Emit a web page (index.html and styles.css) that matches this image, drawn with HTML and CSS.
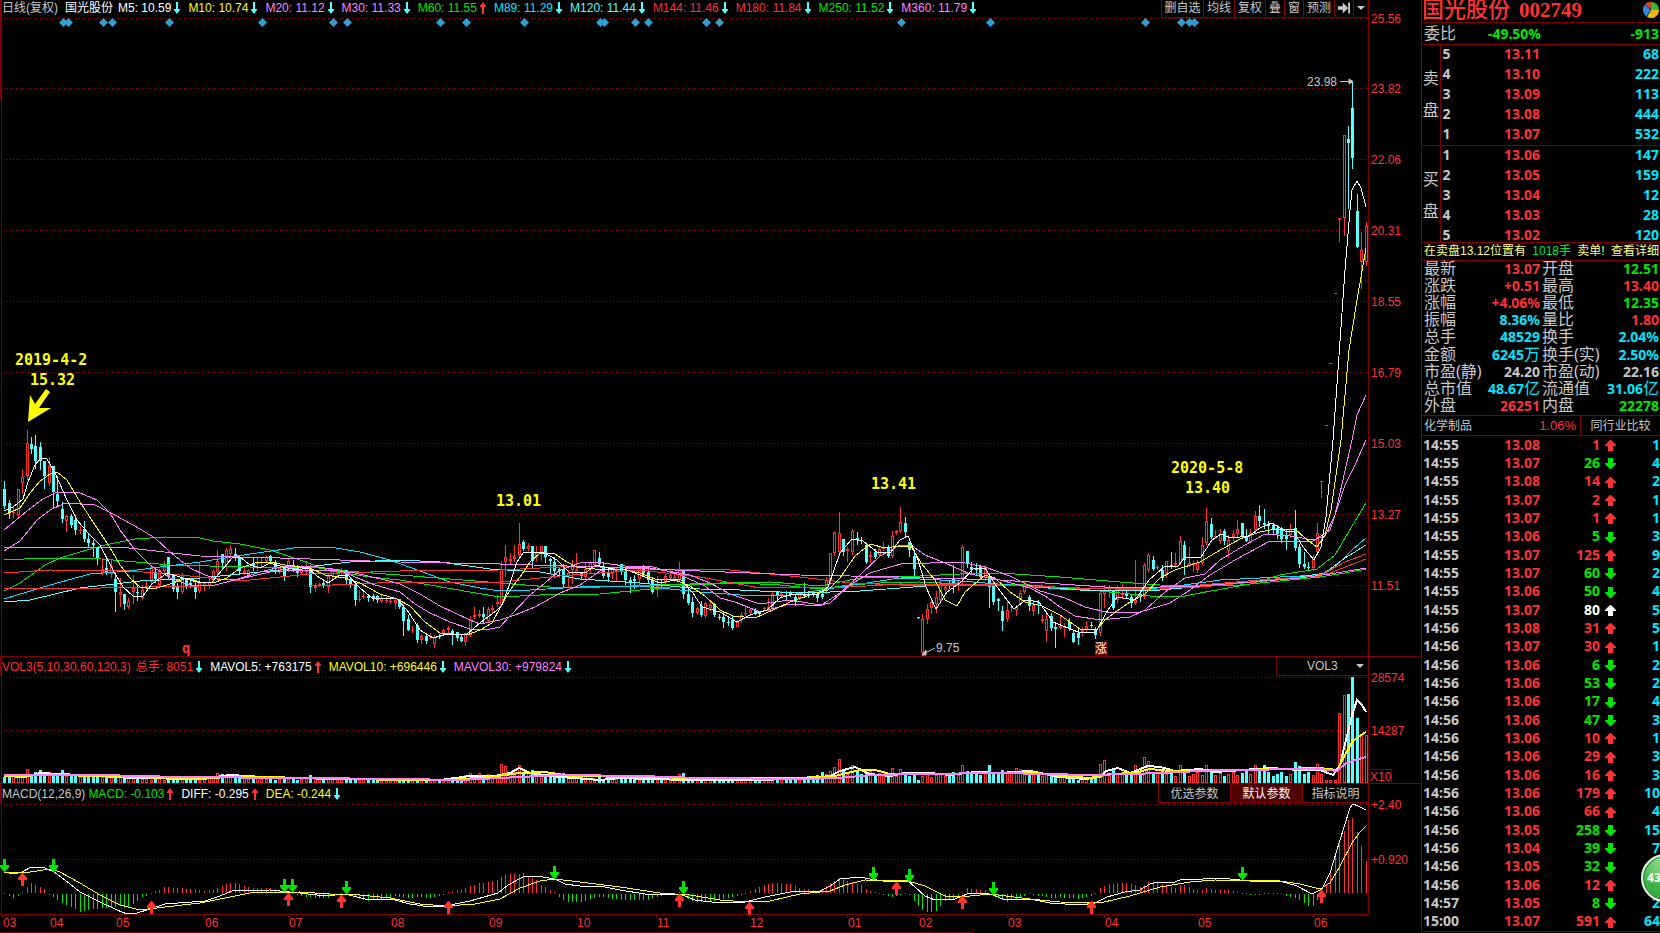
FILE: index.html
```html
<!DOCTYPE html>
<html lang="zh-CN">
<head>
<meta charset="utf-8">
<title>国光股份 002749</title>
<link rel="stylesheet" href="styles.css">
</head>
<body>
<div class="terminal">
  <main class="charts">
    <section class="pane">
      <header class="pane-head pane-head--price">
        <div class="legend" id="legend-price">
          <span class="grey legend-title">日线(复权)</span>
          <span class="white legend-name">国光股份</span>
        </div>
        <nav class="tools">
          <button class="tool">删自选</button>
          <button class="tool">均线</button>
          <button class="tool">复权</button>
          <button class="tool">叠</button>
          <button class="tool">窗</button>
          <button class="tool">预测</button>
          <button class="tool" aria-label="跳到最新"><svg width="13" height="12" viewBox="0 0 13 12"><path fill="#c8c8c8" d="M0 4h5V0l6 6-6 6V8H0zM11 0h2v12h-2z"/></svg></button>
          <button class="tool tool--last" aria-label="更多"><svg width="8" height="4" viewBox="0 0 8 4"><path fill="#c8c8c8" d="M0 0h8L4 4z"/></svg></button>
        </nav>
        <span class="axis-gap"></span>
      </header>
      <svg class="plot" id="price" viewBox="0 18 1421 639"></svg>
    </section>
    <section class="pane">
      <header class="pane-head">
        <div class="legend legend--vol" id="legend-vol"></div>
        <div class="picker">
          <select class="picker-select" aria-label="指标"><option>VOL3</option></select>
          <svg class="picker-arrow" width="8" height="4" viewBox="0 0 8 4"><path fill="#c8c8c8" d="M0 0h8L4 4z"/></svg>
        </div>
        <span class="axis-gap"></span>
      </header>
      <svg class="plot" id="volume" viewBox="0 676 1421 108"></svg>
    </section>
    <section class="pane">
      <header class="pane-head">
        <div class="legend" id="legend-macd"></div>
        <div class="params">
          <button class="param">优选参数</button>
          <button class="param param--on">默认参数</button>
          <button class="param">指标说明</button>
        </div>
        <span class="axis-gap"></span>
      </header>
      <svg class="plot" id="macd" viewBox="0 803 1421 130"></svg>
    </section>
  </main>

  <aside class="quote">
    <h1 class="quote-title"><span class="quote-name">国光股份</span><span>002749</span>
      <svg class="pie" width="16" height="16" viewBox="0 0 16 16"><path fill="#e2402c" d="M7.500 7.500L2 2A8 8 0 0 1 8 0z"/><path fill="#38b838" d="M8 8V0A8 8 0 0 1 16 8z"/><path fill="#e8b820" d="M8 8h8A8 8 0 0 1 4 15z"/><path fill="#2f86d8" d="M7.500 8l-4 6.500A8 8 0 0 1 2 2.500z"/></svg>
    </h1>
    <div class="ratio"><span class="ratio-label">委比</span><b class="green ratio-pct">-49.50%</b><b class="green ratio-diff">-913</b></div>
    <div class="book">
      <table class="book-table">
        <tr><th class="side" rowspan="5">卖<br>盘</th><td class="level">5</td><td class="red price">13.11</td><td class="cyan qty">68</td></tr>
        <tr><td class="level">4</td><td class="red price">13.10</td><td class="cyan qty">222</td></tr>
        <tr><td class="level">3</td><td class="red price">13.09</td><td class="cyan qty">113</td></tr>
        <tr><td class="level">2</td><td class="red price">13.08</td><td class="cyan qty">444</td></tr>
        <tr><td class="level">1</td><td class="red price">13.07</td><td class="cyan qty">532</td></tr>
      </table>
    </div>
    <div class="book book--buy">
      <table class="book-table">
        <tr><th class="side" rowspan="5">买<br>盘</th><td class="level">1</td><td class="red price">13.06</td><td class="cyan qty">147</td></tr>
        <tr><td class="level">2</td><td class="red price">13.05</td><td class="cyan qty">159</td></tr>
        <tr><td class="level">3</td><td class="red price">13.04</td><td class="cyan qty">12</td></tr>
        <tr><td class="level">4</td><td class="red price">13.03</td><td class="cyan qty">28</td></tr>
        <tr><td class="level">5</td><td class="red price">13.02</td><td class="cyan qty">120</td></tr>
      </table>
    </div>
    <div class="notice"><span>在卖盘13.12位置有</span><span class="notice-lots">1018手</span><span>卖单!</span><span>查看详细</span></div>
    <table class="stats">
      <tr><th>最新</th><td class="red">13.07</td><th>开盘</th><td class="green">12.51</td></tr>
      <tr><th>涨跌</th><td class="red">+0.51</td><th>最高</th><td class="red">13.40</td></tr>
      <tr><th>涨幅</th><td class="red">+4.06%</td><th>最低</th><td class="green">12.35</td></tr>
      <tr><th>振幅</th><td class="cyan">8.36%</td><th>量比</th><td class="red">1.80</td></tr>
      <tr><th>总手</th><td class="cyan">48529</td><th>换手</th><td class="cyan">2.04%</td></tr>
      <tr><th>金额</th><td class="cyan">6245<span class="unit">万</span></td><th>换手(实)</th><td class="cyan">2.50%</td></tr>
      <tr><th>市盈(静)</th><td class="grey">24.20</td><th>市盈(动)</th><td class="grey">22.16</td></tr>
      <tr><th>总市值</th><td class="cyan">48.67<span class="unit">亿</span></td><th>流通值</th><td class="cyan">31.06<span class="unit">亿</span></td></tr>
      <tr><th>外盘</th><td class="red">26251</td><th>内盘</th><td class="green">22278</td></tr>
    </table>
    <div class="sector"><span class="sector-name">化学制品</span><span class="red sector-pct">1.06%</span><button class="sector-compare">同行业比较</button></div>
    <table class="ticks" id="ticks"></table>
    <span class="ball">43</span>
  </aside>
</div>
<script src="chart.js"></script>
</body>
</html>
```
FILE: styles.css
```css
* { box-sizing: border-box; }
body {
  margin: 0;
  background: #000;
  color: #c8c8c8;
  font: 12px/16px "Liberation Sans", "Noto Sans CJK SC", sans-serif;
  overflow: hidden;
}
button, select { font: inherit; color: inherit; background: none; border: 0; margin: 0; padding: 0; }
.red { color: #ff3232; }
.green { color: #00e600; }
.cyan { color: #00e6ff; }
.aqua { color: #54ffff; }
.white { color: #fff; }
.grey { color: #c8c8c8; }
.yellow { color: #ffff00; }
.pink { color: #ff80ff; }

.terminal { display: flex; min-height: 100vh; }
.charts { flex: 1; min-width: 0; }
.plot { display: block; width: 100%; height: auto; overflow: visible; }

.pane-head { display: flex; height: 19px; border-left: 2px solid #800000; white-space: nowrap; }
.pane-head--price { height: 18px; }
.pane-head--price .legend, .pane-head--price .tool { padding-bottom: 2px; }
.axis-gap { flex: none; width: 53px; border-left: 1px solid #800000; }
.legend { flex: 1; display: flex; align-items: center; min-width: 0; }
.legend-title { width: 63px; }
.legend-name { width: 53px; }
.legend-item { display: flex; align-items: center; margin-right: 7px; }
.legend-item svg { margin-left: 2px; }
.legend-item--tight { margin-right: 3px; }
.legend--vol .legend-item--tight { margin-right: 5px; }

.tools { display: flex; }
.tool { display: flex; align-items: center; justify-content: center; padding: 0 3px; border-left: 1px solid #800000; border-bottom: 1px solid #800000; }
.tool:nth-child(-n+6) { min-width: 19px; }
.tool:nth-child(1) { width: 42px; }
.tool:nth-child(2), .tool:nth-child(3), .tool:nth-child(6) { width: 31px; }
.tool:nth-child(7) { width: 19px; }
.tool--last { width: 15px; }

.picker { position: relative; display: flex; width: 92px; border-left: 1px solid #800000; border-bottom: 1px solid #800000; }
.picker-select { appearance: none; width: 100%; padding-left: 30px; outline: 0; }
.picker-arrow { position: absolute; right: 4px; top: 7px; pointer-events: none; }

.params { display: flex; }
.param { width: 72px; padding-top: 2px; border-left: 1px solid #800000; border-bottom: 1px solid #800000; }
.param:last-child { width: 66px; }
.param--on { background: #500000; color: #fff; }

.axis { fill: #ff3232; font-size: 12px; }
.mark { fill: #ffff00; font: bold 15px "DejaVu Sans Mono", monospace; }
.mark--q { fill: #ff3232; font-size: 14px; }
.peak { fill: #c8c8c8; font-size: 12px; }
.badge { fill: #fff; font-size: 12px; }

.quote { position: relative; flex: none; width: 239px; display: flex; flex-direction: column; border-left: 1px solid #800000; overflow: hidden; }
.quote-title { display: flex; align-items: center; height: 22px; margin: 0; padding-bottom: 2px; color: #ff3232; font: bold 21px/20px "Liberation Serif", "Noto Sans CJK SC", serif; }
.quote-name { width: 97px; font-size: 22px; font-weight: 500; }
.pie { margin-left: auto; margin-right: 1px; }
.ratio { display: flex; align-items: center; height: 23px; border-top: 1px solid #800000; border-bottom: 1px solid #800000; padding: 0 1px 0 2px; font-size: 16px; }
.ratio-label { width: 36px; }
.ratio b { font: bold 14px/20px "Noto Sans", sans-serif; }
.ratio-pct { width: 81px; text-align: right; }
.ratio-diff { margin-left: auto; }
.book { border-bottom: 1px solid #800000; }
.book--buy { height: 97px; }
.book-table, .stats, .ticks { width: 100%; border-collapse: collapse; font: bold 14px/16px "Noto Sans", "Noto Sans CJK SC", sans-serif; }
.book-table td { height: 20px; padding: 0 0 3px; }
.book--buy .book-table { margin-bottom: -3px; }
.book-table .side { width: 18px; padding: 0 0 3px; border-right: 1px solid #800000; font-size: 16px; font-weight: 400; line-height: 32px; text-align: center; }
.book-table .level { width: 24px; padding-left: 2px; }
.book-table .price { width: 76px; text-align: right; }
.book-table .qty { padding-right: 1px; text-align: right; }
.notice { display: flex; align-items: center; justify-content: space-between; height: 18px; padding: 0 1px 2px 2px; border-bottom: 1px solid #800000; background: #000; color: #ffff80; white-space: nowrap; }
.notice-lots { color: #00e640; }
.stats { table-layout: fixed; border-bottom: 1px solid #800000; height: 155px; }
.stats th { width: 64px; padding: 0 0 2px 2px; font-size: 16px; font-weight: 400; text-align: left; white-space: nowrap; }
.stats td { height: 17px; padding: 0 1px 2px 0; line-height: 15px; text-align: right; white-space: nowrap; }
.stats th { line-height: 15px; }
.stats td:nth-child(2) { width: 54px; padding-right: 0; }
.unit { font-size: 16px; font-weight: 400; line-height: 15px; }
.sector { display: flex; align-items: center; height: 20px; border-bottom: 1px solid #800000; padding-left: 2px; }
.sector-name { flex: 1; }
.sector-pct { font-size: 13px; padding-right: 4px; }
.sector-compare { align-self: stretch; width: 80px; border-left: 1px solid #800000; }
.ticks { flex: 1; display: grid; grid-auto-rows: 1fr; margin-bottom: 1px; border-bottom: 1px solid #800000; }
.ticks tbody { display: contents; }
.ticks tr { display: grid; grid-template-columns: 42px 75px 60px 20px 1fr; align-items: center; padding: 0 0 1px 1px; }
.ticks td { padding: 0; text-align: right; }
.ticks td:first-child { text-align: left; }
.ticks td:nth-child(4) { text-align: center; line-height: 12px; }
.ticks svg { vertical-align: middle; }
.ball { position: absolute; right: -29px; top: 854px; width: 48px; height: 48px; border: 2px solid #e8f4e8; border-radius: 50%; background: radial-gradient(circle at 50% 10%, #9be29b, #3fb548 60%, #2f9c3c); box-shadow: inset 0 0 0 1px #2a7a35; color: #fff; font: bold 12px/44px "Noto Sans", sans-serif; padding-left: 4px; }
```
FILE: chart.js
```js
const NS = 'http://www.w3.org/2000/svg';
const RED = '#ff3232', AQUA = '#54ffff', GREEN = '#00e600', LINE = '#800000', PINK = '#ff80ff';
const EDGE = 1368;

function add(parent, tag, attrs, text) {
  const el = document.createElementNS(NS, tag);
  for (const k in attrs) el.setAttribute(k, attrs[k]);
  if (text) el.textContent = text;
  parent.appendChild(el);
  return el;
}
const rect = (p, x, y, w, h, fill) => add(p, 'rect', { x, y, width: w, height: h, fill });
const hline = (p, y, x2 = EDGE) => rect(p, 0, y, x2, 1, LINE);
function dotted(p, y) {
  add(p, 'path', { d: `M4 ${y}.5H${EDGE}`, stroke: '#a00000', 'stroke-dasharray': '1 2', 'shape-rendering': 'crispEdges' });
}
function curve(p, points, stroke, width = 1) {
  add(p, 'polyline', { points, fill: 'none', stroke, 'stroke-width': width, 'shape-rendering': 'crispEdges' });
}
const label = (p, x, y, text, cls = 'axis') => add(p, 'text', { x, y, class: cls }, text);
const pairs = s => s.split(' ').map(q => q.split(',').map(Number));
function at(points, x) {
  for (let i = 1; i < points.length; i++) {
    const [x0, y0] = points[i - 1], [x1, y1] = points[i];
    if (x <= x1) return y0 + (y1 - y0) * (x - x0) / (x1 - x0);
  }
  return points[points.length - 1][1];
}

/* x, high, body top, body bottom, low; r = rising, c = falling */
const candles = `c4 481 489 506 508|c9 500 503 513 518|r13 507 512 513 517|r18 489 489 515 517|r22 469 477 483 493|r27 430 443 476 479|c31 437 444 449 453|c35 435 446 461 468|c40 442 447 461 469|c44 461 461 476 488|r49 457 466 483 485|c53 466 466 492 508|c57 476 494 501 505|c62 502 509 519 522|r66 515 516 521 531|c71 514 516 525 527|c75 515 520 530 534|r80 526 530 531 533|c84 521 529 539 541|c88 534 539 543 546|c93 540 543 545 556|c97 547 547 559 564|r102 558 569 573 574|c106 560 568 573 574|r111 559 566 574 577|c115 573 579 592 611|r120 578 592 595 606|c124 594 594 604 609|r128 598 601 607 608|r133 575 588 592 603|c137 584 592 593 600|r142 585 590 598 599|r146 581 586 587 588|r151 565 567 582 583|c155 569 572 579 582|r159 569 570 585 586|r164 561 565 571 572|c168 557 557 577 578|c173 574 574 589 591|c177 583 587 592 598|r182 573 575 592 593|c186 578 579 586 588|c190 579 583 585 587|c195 582 585 592 598|r199 563 583 591 592|r204 582 583 586 590|r209 577 582 586 588|r213 569 571 580 582|r217 550 561 572 575|c222 554 554 563 568|r226 548 550 565 570|r230 545 549 554 555|c235 548 554 557 560|c239 556 557 571 573|r244 566 571 573 574|r248 569 570 575 576|c253 558 564 566 570|r257 558 563 564 570|r261 557 562 563 567|r266 556 557 561 562|c270 555 556 561 562|c275 560 562 569 573|r279 567 568 571 573|c284 566 567 577 580|r288 559 561 570 571|c293 560 565 567 571|c297 565 567 573 576|r301 565 567 573 574|r306 561 566 572 573|c310 565 566 587 592|r315 583 586 588 591|r319 583 584 585 586|c323 579 583 585 587|r328 574 576 587 592|r332 568 570 576 579|r337 570 571 574 576|r341 568 570 572 574|c346 570 570 580 583|c350 578 580 584 587|c355 583 585 600 605|r359 590 599 600 601|r363 592 596 597 598|c368 594 596 598 601|c373 594 596 598 600|c377 595 596 600 602|r381 594 598 601 602|r386 597 600 601 602|r390 597 601 602 603|r395 598 600 603 608|c399 599 599 607 608|c403 606 607 621 635|c408 615 619 630 630|r412 626 630 631 632|c417 623 625 640 642|r421 634 636 640 643|c426 634 636 641 643|r430 633 636 637 638|r434 635 637 644 647|c439 634 636 637 638|r443 629 630 633 634|r448 626 628 630 632|c452 629 631 634 644|c457 632 632 638 640|c461 635 637 641 641|r465 633 633 642 645|r470 616 620 635 636|r474 607 615 617 618|r479 610 614 616 617|c483 607 614 617 622|r488 607 609 621 622|r492 605 608 610 613|r497 595 602 604 606|r501 561 569 605 606|r505 545 557 562 576|r510 553 559 561 563|r514 545 556 559 561|r519 523 544 555 556|c523 540 542 549 550|r528 543 546 549 550|c532 546 546 561 567|r536 546 553 557 561|r541 546 546 552 560|c545 546 546 557 562|c550 558 559 561 572|c554 557 562 571 577|c559 567 569 571 575|c563 564 569 584 587|r568 570 573 576 587|r572 560 565 570 583|r576 553 570 573 574|c581 572 573 576 578|r585 562 569 577 579|r590 561 563 569 572|r594 550 550 565 566|c599 552 558 564 566|c603 562 566 576 577|c608 570 572 577 581|r612 567 569 574 578|r616 568 569 571 580|c621 564 564 572 574|c625 567 571 580 584|c630 577 580 582 592|c634 575 579 581 588|r639 566 566 579 584|c643 565 568 573 576|c648 569 572 580 583|c652 577 580 592 593|r657 576 586 590 596|c661 579 584 586 588|r665 574 576 583 584|r670 570 575 578 580|r674 573 577 580 581|r679 562 570 580 581|c683 570 570 594 598|c688 589 594 603 604|c692 597 602 613 616|r697 607 608 613 614|c701 601 606 615 616|r705 602 603 616 617|r710 602 605 608 610|c714 603 604 615 616|c719 614 617 618 619|c723 612 617 622 627|c728 618 622 623 625|c732 616 620 628 629|r737 620 622 627 627|r741 612 615 620 622|r745 605 613 614 615|r750 609 610 613 615|c755 608 610 613 614|c759 611 612 614 616|r764 607 608 609 610|r768 598 607 609 611|r772 591 594 608 609|c777 591 592 596 599|r781 591 594 595 597|c786 591 595 596 599|c790 591 592 595 596|c795 594 597 602 605|r799 593 594 598 599|c804 583 594 596 597|c808 591 594 595 597|c813 591 593 595 596|c817 593 594 598 601|c822 592 594 597 598|r826 577 580 590 593|r830 553 553 580 583|r834 532 532 553 555|r839 512 533 552 553|c843 539 539 552 555|r847 547 549 551 561|r852 529 531 552 554|c857 532 538 540 544|c861 537 540 541 543|c866 543 545 562 563|r870 551 555 557 562|c875 549 552 557 558|r879 546 549 555 556|r883 542 547 549 550|c888 545 547 556 557|r892 531 536 556 557|r896 530 531 533 534|r900 507 522 531 532|c905 517 523 532 537|c909 542 542 550 556|c914 552 556 569 577|c918 617 617 618 618|r922 614 619 653 655|r927 604 609 619 623|r931 600 602 608 613|r936 591 597 604 612|r940 578 582 600 603|r945 583 587 590 593|c949 580 584 586 588|c953 565 579 583 592|r958 581 582 585 590|r962 545 547 578 583|c967 551 551 564 567|c971 562 567 570 572|c976 563 569 570 575|c980 565 566 577 578|r985 565 567 578 580|c989 574 576 587 607|c993 582 586 602 604|c998 598 599 601 610|c1002 606 611 621 630|r1007 601 610 619 621|r1011 605 607 608 611|r1016 605 607 610 615|r1020 590 593 604 605|r1024 582 585 592 593|c1029 595 597 606 610|r1033 600 605 611 615|c1038 600 602 603 613|r1042 615 619 621 622|r1046 611 619 631 641|c1051 613 616 628 630|c1055 624 627 629 647|r1060 615 626 628 629|r1064 623 627 628 636|c1069 618 622 628 630|c1073 631 633 642 642|c1078 629 633 638 644|r1082 627 630 632 635|r1086 621 626 629 631|c1091 622 625 626 627|c1095 627 630 635 638|r1100 591 593 633 635|r1104 585 590 594 607|r1109 585 588 592 597|c1113 590 591 608 609|r1117 586 590 600 602|r1122 584 593 595 598|c1126 588 594 596 598|c1131 595 597 603 607|r1135 560 600 603 604|c1140 592 594 597 601|r1144 563 565 597 598|r1148 553 555 570 571|c1153 556 560 569 570|r1157 565 567 568 569|c1162 565 570 578 580|r1166 561 561 573 577|c1171 552 565 567 568|r1175 553 563 565 567|r1180 536 541 563 564|c1184 541 545 560 574|r1189 547 563 565 566|r1193 561 563 565 571|r1197 560 562 570 572|r1202 537 545 563 564|r1206 508 521 543 544|c1211 518 524 537 538|r1215 530 536 537 538|r1220 529 534 541 543|c1224 529 531 541 544|r1228 535 540 551 557|r1233 530 534 537 540|r1237 520 529 534 536|c1242 523 523 536 538|c1246 529 537 541 541|r1250 529 533 542 542|r1255 511 516 530 532|c1259 505 516 521 526|c1264 509 523 525 528|c1268 521 524 526 534|c1273 523 525 530 534|c1277 525 528 534 538|c1281 527 528 539 542|c1286 530 535 539 549|r1290 524 529 535 537|c1295 510 528 548 550|c1299 544 547 564 567|c1304 552 564 567 568|c1308 562 567 568 569|r1313 555 557 568 570|r1317 523 533 552 553|r1321 481 481 482 497|r1326 425 425 426 426|r1330 363 363 364 364|r1335 293 293 294 294|r1339 218 218 219 241|r1344 135 135 218 235|c1348 126 139 143 208|c1352 81 108 158 168|c1357 194 211 247 247|r1361 232 250 262 288|r1366 222 226 262 265`
  .split('|').map(s => [s[0], ...s.slice(1).split(' ').map(Number)]);

/* price pane */
const price = document.getElementById('price');
['25.56', '23.82', '22.06', '20.31', '18.55', '16.79', '15.03', '13.27', '11.51'].forEach((t, i) => {
  const y = 18 + (i ? i * 71 - 1 : 0);
  dotted(price, y);
  label(price, 1371, y + 5, t);
});
rect(price, 1, 18, 1, 639, LINE);
rect(price, 0, 18, 1, 82, LINE);
rect(price, EDGE, 18, 1, 639, LINE);
hline(price, 656, 1421);
for (const x of [63, 68, 103, 112, 169, 262, 333, 347, 440, 466, 524, 600, 604, 635, 648, 706, 719, 901, 990, 1145, 1181, 1189, 1194])
  add(price, 'path', { d: `M${x - 4} 22.5l4.500-4.500 4.500 4.500-4.500 4.500z`, fill: '#2e9fd0' });
for (const [k, x, hi, top, bot, lo] of candles) {
  if (k === 'c') {
    rect(price, x, hi, 1, lo - hi + 1, AQUA);
    rect(price, x - 1, top, 3, Math.max(1, bot - top), AQUA);
  } else {
    if (top > hi) rect(price, x, hi, 1, top - hi, RED);
    if (lo > bot) rect(price, x, bot, 1, lo - bot + 1, RED);
    if (bot - top < 3) rect(price, x - 1, top, 3, bot - top, RED);
    else add(price, 'rect', { x: x - 0.5, y: top + 0.5, width: 2, height: bot - top - 1, fill: 'none', stroke: RED });
  }
}
curve(price, '4,560 45,558 90,558 170,565 250,567 310,567 345,571 400,575 500,583 550,587 600,587 660,585 720,583 770,582 820,586 860,578 900,577 960,574 1000,573 1060,577 1120,582 1160,585 1230,586 1290,580 1320,577 1345,573 1366,569', GREEN);
curve(price, '4,591 20,583 45,565 60,558 80,552 105,545 135,539 165,537 200,538 213,541 240,544 270,550 300,560 330,571 370,577 400,580 430,585 470,592 500,597 540,595 600,594 640,590 690,585 740,583 780,585 820,589 850,585 880,583 920,582 960,584 1000,584 1030,585 1080,589 1120,593 1150,596 1180,597 1200,593 1250,584 1280,575 1317,569 1335,555 1352,526 1366,503', GREEN);
curve(price, '4,599 50,585 90,574 130,571 160,567 200,562 250,554 300,547 330,547 360,552 390,560 420,571 450,582 480,588 500,591 530,590 580,587 640,586 700,592 740,595 790,595 840,587 900,578 960,581 1010,585 1060,589 1120,591 1170,587 1220,580 1280,577 1320,575 1335,567 1352,550 1366,538', '#00e0ff');
curve(price, '4,602 30,600 80,588 140,581 200,578 280,570 350,562 400,560 440,562 490,569 540,572 580,579 640,583 700,589 740,590 800,593 860,591 940,585 1020,585 1080,590 1160,590 1250,582 1300,577 1325,573 1345,558 1366,545', AQUA);
curve(price, '4,573 50,570 130,571 180,575 240,581 310,574 400,571 500,570 580,566 650,569 720,569 800,577 850,583 900,585 1000,585 1080,588 1150,590 1200,585 1260,580 1320,576 1345,562 1366,554', RED);
curve(price, '4,588 100,588 200,586 310,586 400,582 500,582 560,576 640,570 700,577 760,588 850,587 900,584 1000,585 1100,589 1200,587 1300,578 1330,573 1366,559', RED);
curve(price, '4,547 120,547 200,556 280,558 400,562 500,564 600,567 700,571 800,575 900,577 1000,580 1060,584 1120,588 1200,586 1300,578 1330,574 1366,568', PINK);
curve(price, '4,551 20,541 37,520 50,510 65,503 95,505 115,515 140,529 155,538 170,552 190,568 205,575 220,580 240,579 270,572 300,570 330,570 355,573 385,580 400,584 420,594 440,606 470,620 480,624 500,620 515,615 535,607 560,593 580,585 600,571 620,567 650,568 690,575 710,583 730,594 760,604 790,600 820,605 830,603 850,585 870,573 890,567 905,563 930,563 960,562 985,567 1010,576 1040,591 1065,598 1085,607 1110,613 1140,612 1170,603 1190,590 1210,575 1235,560 1270,541 1313,541 1330,530 1345,485 1355,465 1366,440', PINK);
curve(price, '4,530 27,511 43,499 57,492 80,493 97,500 110,513 120,530 135,550 150,565 170,578 190,585 215,585 235,580 260,572 285,566 310,566 340,570 355,577 375,585 400,592 415,604 430,613 450,622 470,629 490,629 500,627 510,616 530,595 545,583 560,570 580,563 595,562 625,566 650,566 680,575 705,586 720,598 735,602 760,612 790,604 820,606 840,593 860,575 880,556 900,545 911,545 925,555 945,563 970,574 1000,580 1030,588 1045,596 1060,607 1075,616 1100,620 1130,617 1145,610 1165,592 1185,578 1205,574 1220,560 1245,545 1265,534 1290,536 1313,540 1325,536 1335,515 1352,440 1357,415 1366,395', PINK);
curve(price, '4,515 20,508 30,493 40,481 50,474 57,472 67,480 80,502 95,525 105,540 112,551 120,565 130,578 140,587 153,589 167,585 187,578 200,582 213,583 227,578 240,568 255,563 270,562 285,565 300,567 310,568 325,575 345,578 360,583 380,594 397,599 410,606 425,622 440,633 467,635 480,630 492,623 500,608 510,590 520,577 530,562 540,553 555,554 567,562 577,567 595,569 620,569 640,573 655,579 675,580 690,586 705,596 720,610 733,616 755,618 775,609 790,602 815,593 828,590 840,578 855,556 870,544 885,548 900,546 911,546 921,563 935,580 945,600 957,606 965,592 985,575 995,578 1010,592 1025,602 1042,606 1060,615 1080,629 1096,630 1106,619 1117,611 1130,602 1145,594 1160,578 1175,570 1200,562 1215,553 1240,539 1260,532 1275,529 1295,529 1305,538 1317,547 1325,535 1331,510 1341,440 1349,350 1357,300 1366,248', '#ff0');
curve(price, '4,511 13,507 23,499 28,482 35,465 41,458 47,459 55,473 67,500 77,520 88,533 100,545 113,570 123,587 133,596 143,596 152,584 167,573 180,577 200,583 212,582 222,570 232,558 240,557 250,565 260,568 270,563 283,567 297,570 308,568 317,576 328,583 340,575 348,575 360,588 372,598 397,599 407,610 420,630 433,638 447,634 467,634 480,623 497,610 502,605 510,583 517,562 523,553 543,552 557,560 570,573 587,572 595,565 613,569 627,570 640,575 660,583 680,579 693,593 702,607 720,612 737,622 750,615 767,610 780,598 793,594 817,595 828,587 840,553 852,539 863,541 877,552 890,553 900,540 908,536 914,550 919,563 926,587 936,609 947,592 960,583 974,568 985,568 997,587 1014,609 1026,600 1039,602 1053,622 1078,632 1096,632 1106,613 1117,597 1135,600 1149,580 1164,567 1178,566 1185,557 1201,557 1212,540 1221,534 1231,538 1249,536 1260,528 1272,523 1285,531 1294,532 1303,547 1314,560 1321,547 1326,517 1333,440 1338,370 1345,270 1350,210 1352,190 1357,181 1361,188 1366,207', '#fff');

label(price, 15, 365, '2019-4-2', 'mark');
label(price, 30, 385, '15.32', 'mark');
add(price, 'path', { d: 'M28 422l2-27 5 9 11-15 4 3-11 16h12z', fill: '#ff0' });
label(price, 496, 506, '13.01', 'mark');
label(price, 871, 489, '13.41', 'mark');
label(price, 1171, 473, '2020-5-8', 'mark');
label(price, 1185, 493, '13.40', 'mark');
label(price, 182, 653, 'q', 'mark mark--q');
label(price, 1307, 86, '23.98', 'peak');
add(price, 'path', { d: 'M1340 81.500h9M1349 79l4 2.500-4 2.500z', stroke: '#c8c8c8', fill: '#c8c8c8' });
label(price, 936, 652, '9.75', 'peak');
add(price, 'path', { d: 'M935 648l-10 5M926 650v5h-4z', stroke: '#c8c8c8', fill: '#c8c8c8' });
rect(price, 1095, 642, 12, 13, LINE);
label(price, 1095, 653, '涨', 'badge');

/* volume pane */
const volume = document.getElementById('volume');
const profile = pairs('0,7 35,10 62,10 80,7 110,8 140,4 200,4 215,8 240,6 270,4 350,4 400,3 440,3 470,7 500,9 530,10 550,9 600,5 700,4 800,4 830,11 850,12 875,9 918,8 960,9 1000,11 1020,12 1050,8 1080,4 1095,5 1113,10 1160,10 1190,9 1250,10 1300,9 1320,8 1366,8');
const peaks = { 27: 14, 62: 13, 217: 10, 310: 8, 470: 10, 501: 19, 505: 17, 519: 18, 532: 13, 679: 9, 683: 10, 830: 12, 834: 16, 839: 24, 852: 18, 892: 15, 900: 14, 918: 3, 962: 18, 989: 18, 1020: 14, 1100: 19, 1104: 23, 1135: 18, 1144: 26, 1148: 22, 1180: 18, 1206: 18, 1211: 14, 1255: 18, 1264: 18, 1295: 21, 1299: 17, 1317: 19, 1321: 9, 1326: 3, 1330: 3, 1335: 3, 1339: 70, 1344: 88, 1348: 89, 1352: 106, 1357: 65, 1361: 48, 1366: 48 };
dotted(volume, 677);
dotted(volume, 730);
rect(volume, 1, 676, 1, 108, LINE);
rect(volume, EDGE, 676, 1, 108, LINE);
hline(volume, 783, 1421);
candles.forEach(([k, x], i) => {
  const h = peaks[x] || Math.max(3, Math.round(at(profile, x) * (0.75 + (i * 37 % 11) / 20)));
  if (k === 'c') rect(volume, x - 1, 783 - h, 3, h, AQUA);
  else add(volume, 'rect', { x: x - 0.5, y: 783.5 - h, width: 2, height: h - 1, fill: 'none', stroke: RED });
});
curve(volume, '4,776 25,777 40,773 100,776 130,778 200,779 230,775 280,778 350,779 400,780 440,780 470,776 495,776 510,773 519,768 530,773 560,777 600,780 620,778 650,779 690,780 750,780 800,779 830,776 840,771 855,767 870,774 890,776 905,773 930,773 950,775 975,772 1000,773 1030,771 1060,777 1085,779 1100,777 1106,771 1118,768 1130,773 1148,766 1160,767 1175,771 1200,769 1215,772 1270,768 1300,770 1320,770 1333,775 1340,765 1352,715 1357,700 1362,705 1366,712', '#fff', 2);
curve(volume, '4,776 60,775 130,777 200,779 240,776 300,778 400,780 450,780 490,777 520,773 545,772 570,776 640,777 700,778 800,778 835,776 860,770 875,770 890,774 930,774 990,773 1030,772 1050,775 1090,778 1110,774 1135,773 1150,769 1170,771 1240,770 1320,768 1337,770 1345,755 1352,742 1358,737 1366,732', '#ff0', 2);
curve(volume, '4,775 100,775 180,777 300,778 400,779 460,780 520,777 560,775 640,776 700,778 800,779 840,778 870,775 920,774 1000,773 1090,775 1130,774 1160,773 1220,770 1320,769 1337,771 1345,764 1355,760 1366,757', PINK, 2);
label(volume, 1371, 682, '28574');
label(volume, 1371, 735, '14287');
add(volume, 'path', { d: 'M1369 769.500h22.500V783', fill: 'none', stroke: LINE });
label(volume, 1370, 781, 'X10');

/* MACD pane */
const macd = document.getElementById('macd');
const diff = '4,872 14,874 22,872 31,867 45,868 54,872 65,880 80,892 100,902 117,910 127,914 137,913 150,909 165,904 205,901 220,896 232,891 270,890 300,893 325,896 345,894 365,899 395,900 410,904 430,907 445,906 470,901 498,893 508,885 523,877 537,876 555,879 565,884 580,886 600,886 620,890 645,894 680,894 695,900 720,903 745,902 765,897 790,892 820,891 830,886 840,879 860,877 870,879 890,882 908,881 915,887 925,896 935,900 955,899 967,894 985,893 993,895 1005,900 1030,899 1050,903 1080,905 1095,903 1107,897 1125,892 1140,890 1150,884 1158,882 1175,882 1182,879 1200,880 1206,878 1230,879 1250,881 1280,881 1297,886 1312,894 1322,889 1330,873 1340,840 1350,808 1353,804 1358,806 1366,810';
const dea = '4,872 30,872 50,869 60,872 80,883 100,895 120,905 140,910 165,907 200,903 225,898 250,893 300,892 330,894 360,895 390,898 420,904 445,906 475,904 500,899 520,888 540,881 555,879 580,882 620,887 660,893 690,895 720,900 745,902 770,901 800,894 830,891 845,885 865,880 908,881 925,886 945,896 960,897 990,894 1030,899 1060,902 1100,903 1130,896 1160,887 1190,882 1215,880 1280,881 1300,884 1320,889 1330,883 1340,866 1352,843 1360,832 1366,826';
dotted(macd, 804);
dotted(macd, 859);
rect(macd, 1, 803, 1, 112, LINE);
rect(macd, EDGE, 803, 1, 112, LINE);
hline(macd, 914, EDGE + 1);
hline(macd, 932, 973);
const dp = pairs(diff), ep = pairs(dea);
for (const [, x] of candles) {
  const v = Math.round(2 * (at(ep, x) - at(dp, x)));
  if (v >= 0) rect(macd, x, 893 - v, 1, Math.max(1, v), RED);
  else rect(macd, x, 894, 1, Math.min(-v, 18), GREEN);
}
curve(macd, diff, '#fff');
curve(macd, dea, '#ff0');
for (const [x, y] of pairs('4,859 53,859 284,879 292,879 346,881 554,866 683,881 873,867 909,869 993,882 1242,867'))
  add(macd, 'path', { d: `M${x - 1} ${y}h3v6h3v2l-4 5h-1l-4-5v-2h3z`, fill: GREEN });
for (const [x, y] of pairs('22,872 151,900 288,892 341,894 448,900 679,893 749,901 896,881 962,895 1091,900 1321,889'))
  add(macd, 'path', { d: `M${x - 1} ${y + 14}h3v-6h3v-2l-4-5h-1l-4 5v2h3z`, fill: RED });
label(macd, 1371, 809, '+2.40');
label(macd, 1371, 864, '+0.920');
const months = [['03', 2], ['04', 49], ['05', 115], ['06', 204], ['07', 288], ['08', 390], ['09', 488], ['10', 576], ['11', 656], ['12', 749], ['01', 847], ['02', 918], ['03', 1007], ['04', 1104], ['05', 1197], ['06', 1313]];
for (const [t, x] of months) {
  rect(macd, x, 914, 1, 4, LINE);
  label(macd, x + 1, 927, t);
}

/* legends */
const up = `<svg width="8" height="12" viewBox="0 0 8 12"><path fill="${RED}" d="M3 12V5H1V4l3-4 3 4v1H5v7z"/></svg>`;
const down = `<svg width="8" height="12" viewBox="0 0 8 12"><path fill="${AQUA}" d="M3 0v7H1v1l3 4 3-4V7H5V0z"/></svg>`;
function legend(id, items) {
  document.getElementById(id).insertAdjacentHTML('beforeend', items.map(([cls, text, dir]) =>
    `<span class="legend-item ${cls}${dir ? '' : ' legend-item--tight'}">${text}${dir === 'u' ? up : dir === 'd' ? down : ''}</span>`).join(''));
}
legend('legend-price', [['white', 'M5: 10.59', 'd'], ['yellow', 'M10: 10.74', 'd'], ['pink', 'M20: 11.12', 'd'], ['pink', 'M30: 11.33', 'd'], ['green', 'M60: 11.55', 'u'], ['cyan', 'M89: 11.29', 'd'], ['aqua', 'M120: 11.44', 'd'], ['red', 'M144: 11.46', 'd'], ['red', 'M180: 11.84', 'd'], ['green', 'M250: 11.52', 'd'], ['pink', 'M360: 11.79', 'd']]);
legend('legend-vol', [['red', 'VOL3(5,10,30,60,120,3)'], ['red', '总手: 8051', 'd'], ['white', 'MAVOL5: +763175', 'u'], ['yellow', 'MAVOL10: +696446', 'd'], ['pink', 'MAVOL30: +979824', 'd']]);
legend('legend-macd', [['grey', 'MACD(12,26,9)'], ['green', 'MACD: -0.103', 'u'], ['white', 'DIFF: -0.295', 'u'], ['yellow', 'DEA: -0.244', 'd']]);

/* trade ticks: time, price, lots, direction, trades */
const ticks = `14:55 13.08 1 u 1|14:55 13.07 26 d 4|14:55 13.08 14 u 2|14:55 13.07 2 u 1|14:55 13.07 1 u 1|14:55 13.06 5 d 3|14:55 13.07 125 u 9|14:55 13.07 60 d 2|14:55 13.06 50 d 4|14:55 13.07 80 w 5|14:56 13.08 31 u 5|14:56 13.07 30 u 1|14:56 13.06 6 d 2|14:56 13.06 53 d 2|14:56 13.06 17 d 4|14:56 13.06 47 d 3|14:56 13.06 10 u 1|14:56 13.06 29 u 3|14:56 13.06 16 u 3|14:56 13.06 179 u 10|14:56 13.06 66 u 4|14:56 13.05 258 d 15|14:56 13.04 39 d 7|14:56 13.05 32 d|14:56 13.06 12 u|14:57 13.05 8 d 2|15:00 13.07 591 u 64`;
const tone = { u: 'red', d: 'green', w: 'white' };
document.getElementById('ticks').innerHTML = '<tbody>' + ticks.split('|').map(row => {
  const [time, p, lots, dir, n = ''] = row.split(' ');
  const shape = dir === 'd' ? 'M3 0h5v5h3v1l-5 5h-1l-5-5v-1h3z' : 'M3 11h5v-5h3v-1l-5-5h-1l-5 5v1h3z';
  return `<tr><td class="grey">${time}</td><td class="red">${p}</td><td class="${tone[dir]}">${lots}</td><td class="${tone[dir]}"><svg width="11" height="11" viewBox="0 0 11 11"><path fill="currentColor" d="${shape}"/></svg></td><td class="cyan">${n}</td></tr>`;
}).join('') + '</tbody>';
```
